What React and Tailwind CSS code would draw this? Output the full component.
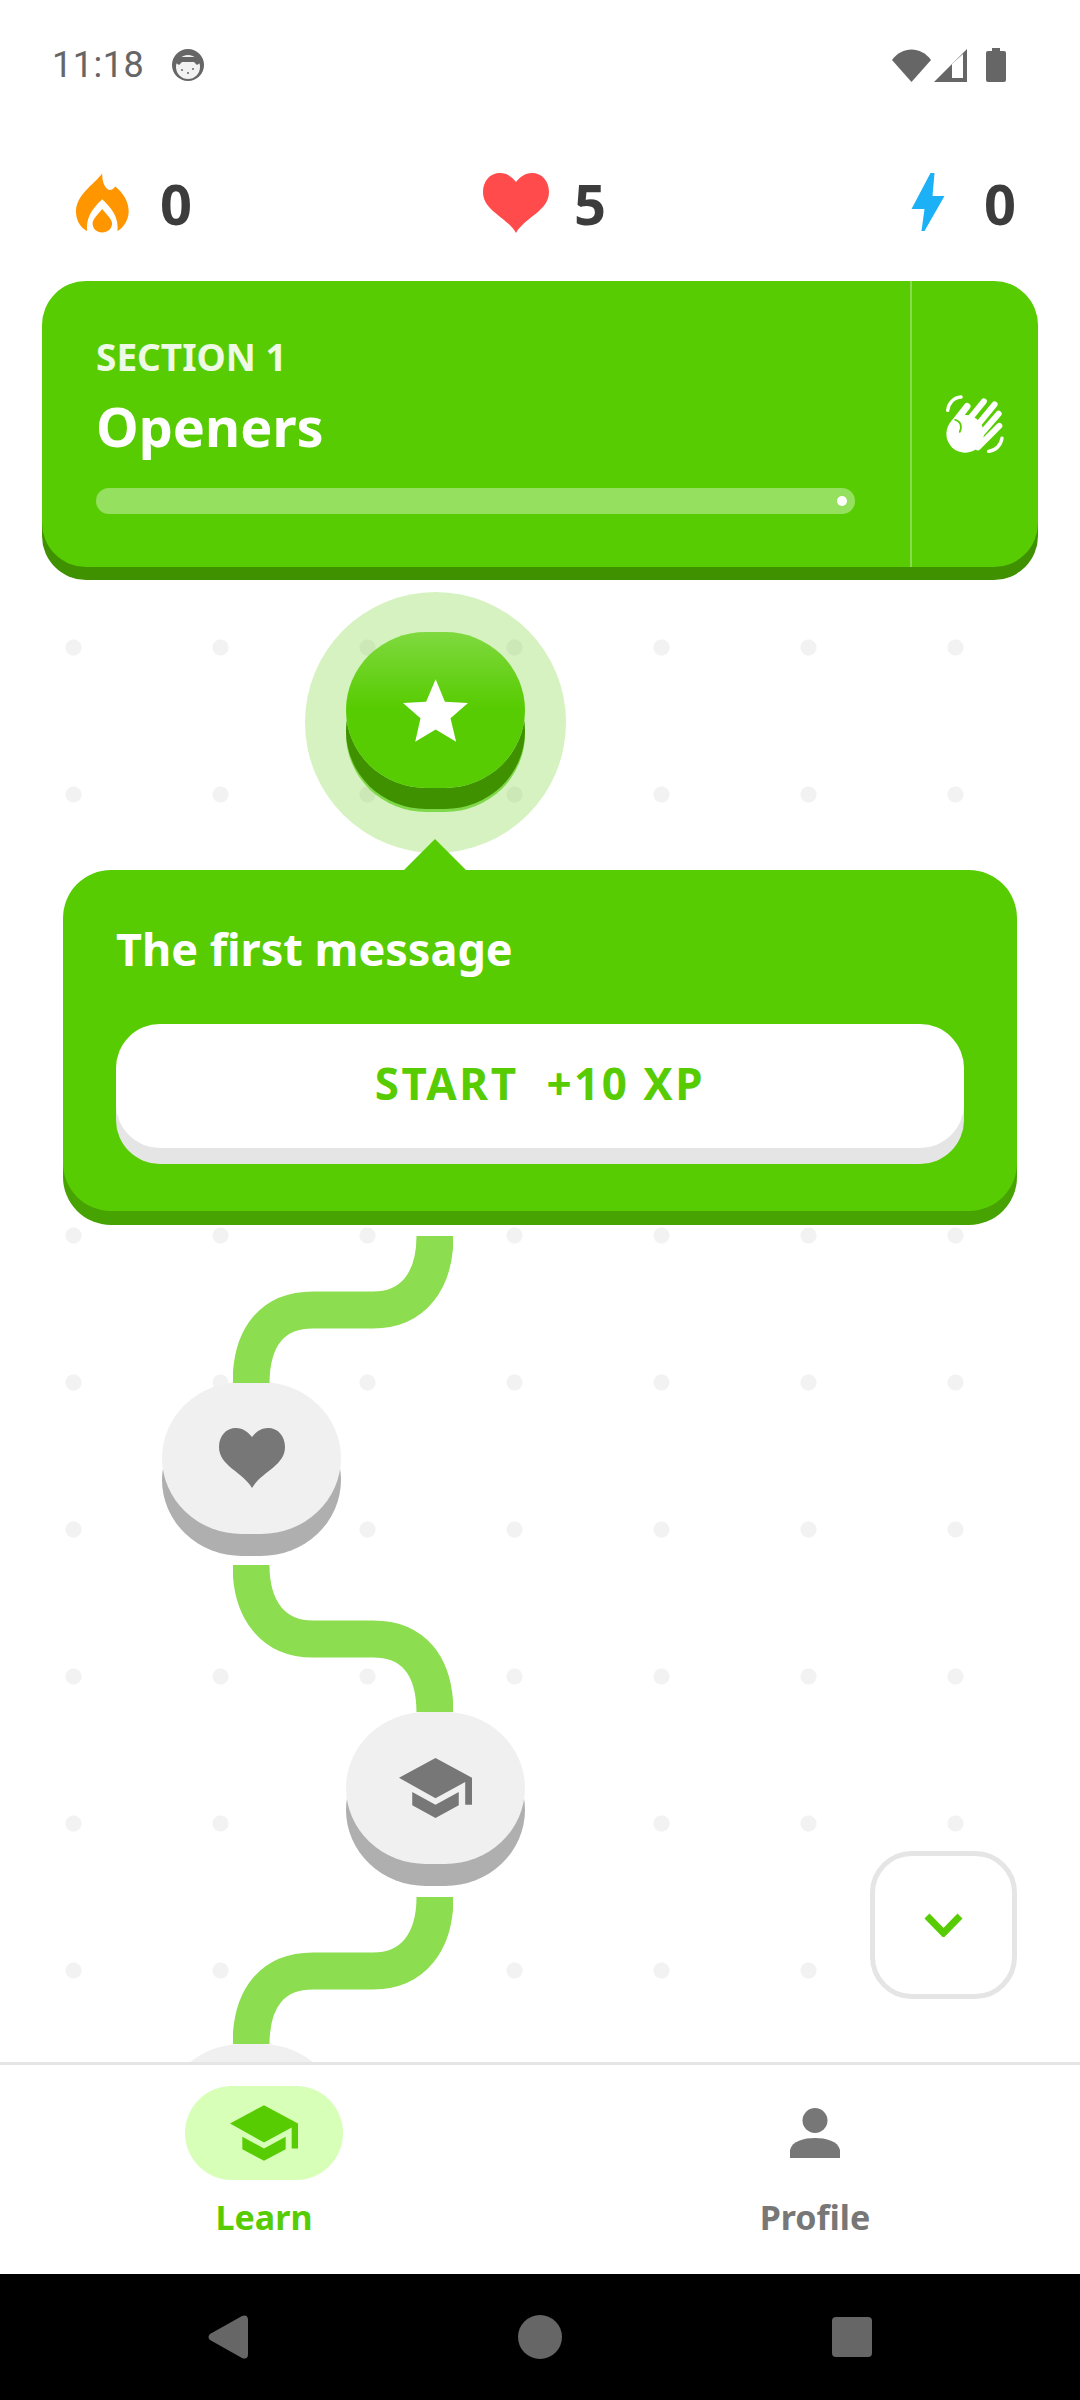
const FONT = "font-['Noto_Sans',sans-serif]";

function Flame() {
  return (
    <svg viewBox="78 65 160 178" className="h-[60px] w-[53px]">
      <path d="M157 65C157 82 160 106 178 115C186 116 192 109 197 104C222 125 237 150 237 180C237 205 222 228 205 238L110 238C90 228 78 205 78 180C78 130 130 100 157 65Z" fill="#ff9600" />
      <path d="M157 143C185 170 208 195 203 243L112 243C106 195 130 170 157 143Z" fill="#fff" />
      <path d="M157 172C172 190 187 205 187 215C187 232 173 243 157 243C141 243 128 232 128 215C128 205 142 190 157 172Z" fill="#ff9600" />
    </svg>
  );
}

function Heart({ color }) {
  return (
    <svg viewBox="0 0 66 60" className="h-[60px] w-[66px]">
      <path d="M33 60C24 44 0 38 0 19C0 8 7 0 17 0C24 0 29 4 33 9C37 4 42 0 49 0C59 0 66 8 66 19C66 38 42 44 33 60Z" fill={color} />
    </svg>
  );
}

function Bolt() {
  return (
    <svg viewBox="0 0 33 59" className="h-[59px] w-[34px]">
      <polygon points="19,0 23,0 21,23 33,23 13,58 10,58 13,36 0,36" fill="#1cb0f6" />
    </svg>
  );
}

function Cap({ color, className }) {
  return (
    <svg viewBox="180 108 204 167" className={className}>
      <polygon points="282,108 384,163 384,238 365,238 365,175 282,220 180,163" fill={color} />
      <polygon points="217,203 282,238 347,203 347,240 282,275 217,240" fill={color} />
    </svg>
  );
}

function Wave() {
  return (
    <svg viewBox="135 100 185 185" className="h-[62px] w-[62px]" fill="none" stroke="#fff" strokeLinecap="round">
      <path d="M146 152C148 130 165 113 186 112" strokeWidth="10" />
      <path d="M268 274C290 272 305 255 308 235" strokeWidth="10" />
      <circle cx="198" cy="222" r="56" fill="#fff" stroke="none" />
      <path d="M204 140L165 190" strokeWidth="20" />
      <path d="M254 125L205 185" strokeWidth="18" />
      <path d="M286 134L222 212" strokeWidth="18" />
      <path d="M298 162L230 240" strokeWidth="18" />
      <path d="M300 198L236 262" strokeWidth="18" />
      <path d="M168 180C184 184 190 198 182 216" stroke="#58cc02" strokeWidth="5" />
    </svg>
  );
}

function Node({ children, className }) {
  return (
    <div className={`flex h-[152px] w-[179px] items-center justify-center rounded-[80px/76px] bg-[#f0f0f0] shadow-[0_22px_0_#afafaf] ${className}`}>
      {children}
    </div>
  );
}

function Connector({ flip, className }) {
  const d = flip
    ? "M18 0C18 45 40 74 80 74L140 74C180 74 202 100 202 148"
    : "M202 0C202 45 180 74 140 74L80 74C40 74 18 100 18 148";
  return (
    <svg viewBox="0 0 220 147" className={`block h-[147px] w-[220px] ml-[233px] ${className}`} fill="none">
      <path d={d} stroke="#8cdd50" strokeWidth="37" />
    </svg>
  );
}

export default function App() {
  return (
    <div className={`flex h-[2400px] w-[1080px] flex-col overflow-hidden bg-white ${FONT}`}>
      {/* status bar */}
      <div className="flex h-[130px] shrink-0 items-center pl-[52px] pr-[74px] text-[#666]">
        <span className="font-['Roboto',sans-serif] text-[36px] leading-none tracking-[0.5px]">11:18</span>
        <svg viewBox="0 0 34 34" className="ml-[27px] h-[34px] w-[34px]">
          <circle cx="17" cy="17" r="16" fill="#666" />
          <circle cx="17" cy="19" r="12" fill="#f2f2f2" />
          <path d="M5 15L8 9L29 9L29 15L26 17L23 14L11 14L8 17Z" fill="#666" />
          <circle cx="11" cy="22" r="1" fill="#666" />
          <circle cx="17" cy="25" r="1" fill="#666" />
          <circle cx="22" cy="21" r="1" fill="#666" />
        </svg>
        <div className="ml-auto flex items-center">
          <svg viewBox="0 0 39 33" className="h-[33px] w-[39px]">
            <path d="M0 11C10 -3 29 -3 39 11L19.5 33Z" fill="#666" />
          </svg>
          <svg viewBox="0 0 33 33" className="ml-[3px] h-[33px] w-[33px]">
            <path d="M0 33L33 0L33 33Z" fill="#666" />
            <path d="M18 29L18 15L29 5L29 29Z" fill="#fff" />
          </svg>
          <svg viewBox="0 0 20 34" className="ml-[19px] h-[34px] w-[20px]">
            <path d="M6 0L14 0L14 3L18 3Q20 3 20 5L20 32Q20 34 18 34L2 34Q0 34 0 32L0 5Q0 3 2 3L6 3Z" fill="#666" />
          </svg>
        </div>
      </div>

      {/* stats */}
      <div className="grid h-[151px] shrink-0 grid-cols-[407px_1fr_auto] items-center pl-[76px] pr-[64px] pb-[6px] text-[56px] font-bold leading-none text-[#3c3c3c]">
        <div className="flex items-center gap-[31px]"><Flame /><span>0</span></div>
        <div className="flex items-center gap-[25px]"><Heart color="#ff4b4b" /><span>5</span></div>
        <div className="flex items-center gap-[39px]"><Bolt /><span>0</span></div>
      </div>

      {/* section card */}
      <div className="relative z-10 mx-[42px] flex h-[286px] shrink-0 rounded-[44px] bg-[#58cc02] shadow-[0_13px_0_#3f9100]">
        <div className="flex-1 pl-[54px] pr-[55px] pt-[56px]">
          <div className="text-[37px] font-bold leading-[40px] text-white/90">SECTION 1</div>
          <div className="mt-[17px] text-[54px] font-bold leading-[64px] text-white">Openers</div>
          <div className="mt-[30px] flex h-[26px] items-center justify-end rounded-full bg-[#95e15f] pr-[8px]">
            <div className="h-[10px] w-[10px] rounded-full bg-white" />
          </div>
        </div>
        <div className="flex w-[128px] items-center justify-center border-l-2 border-white/30">
          <Wave />
        </div>
      </div>

      {/* path */}
      <div className="relative min-h-0 flex-1 overflow-hidden bg-[radial-gradient(circle_at_center,#f2f2f2_7.5px,transparent_8.5px)] bg-[length:147px_147px] bg-[position:0_7px] pt-[25px]">
        <div className="ml-[305px] flex h-[261px] w-[261px] items-start justify-center rounded-full bg-[#58cc02]/25 pt-[40px]">
          <div className="flex h-[156px] w-[179px] items-center justify-center rounded-[80px/78px] bg-[linear-gradient(#7fd93f,#58cc02_48%)] shadow-[0_21px_0_#3f9100,0_24px_0_#7fd84a]">
            <svg viewBox="323 298 197 189" className="h-[63px] w-[65px]">
              <polygon points="422,298 450,366 520,370 467,416 484,487 422,450 360,487 376,416 323,370 393,366" fill="#fff" />
            </svg>
          </div>
        </div>

        {/* lesson popover */}
        <div className="relative mx-[63px] mt-[17px] h-[341px] rounded-[48px] bg-[#58cc02] px-[53px] pt-[53px] shadow-[0_14px_0_#46a302]">
          <div className="absolute left-[341px] top-[-31px] h-0 w-0 border-x-[31px] border-b-[31px] border-x-transparent border-b-[#58cc02]" />
          <div className="text-[45px] font-bold leading-[52px] text-white">The first message</div>
          <div className="mt-[49px] flex h-[124px] items-center justify-center rounded-[44px] bg-white pb-[6px] text-[44px] font-bold text-[#58cc02] shadow-[0_16px_0_#e5e5e5]">
            <span className="whitespace-pre tracking-[2.5px]">START  +10 XP</span>
          </div>
        </div>

        <Connector className="mt-[25px]" />
        <Node className="ml-[162px] mt-[-1px]"><Heart color="#777" /></Node>
        <Connector flip className="mt-[31px]" />
        <Node className="ml-[346px]"><Cap color="#777" className="h-[60px] w-[73px]" /></Node>
        <Connector className="mt-[33px]" />
        <Node className="ml-[162px]" />

        <div className="absolute right-[63px] top-[1284px] flex h-[148px] w-[147px] items-center justify-center rounded-[42px] border-[5px] border-[#e5e5e5] bg-white">
          <svg viewBox="0 0 39 24" className="h-[24px] w-[39px]" fill="none">
            <path d="M3 3L19.5 20L36 3" stroke="#58cc02" strokeWidth="7" />
          </svg>
        </div>
      </div>

      {/* bottom nav */}
      <div className="flex h-[212px] shrink-0 border-t-[3px] border-[#e5e5e5] bg-white pt-[21px] text-[34px] font-bold leading-[40px]">
        <div className="ml-[185px] flex w-[158px] flex-col items-center text-[#58cc02]">
          <div className="flex h-[94px] w-[158px] items-center justify-center rounded-[47px] bg-[#d7ffb8]">
            <Cap color="#58cc02" className="h-[56px] w-[68px]" />
          </div>
          <span className="mt-[17px]">Learn</span>
        </div>
        <div className="ml-[393px] flex w-[158px] flex-col items-center text-[#777]">
          <div className="flex h-[94px] items-center justify-center">
            <svg viewBox="0 0 50 50" className="h-[50px] w-[50px]">
              <circle cx="25" cy="12.5" r="12.5" fill="#777" />
              <path d="M0 50L0 42C2 33 14 30 25 30C36 30 48 33 50 42L50 50Z" fill="#777" />
            </svg>
          </div>
          <span className="mt-[17px]">Profile</span>
        </div>
      </div>

      {/* android nav */}
      <div className="flex h-[126px] shrink-0 items-center bg-black">
        <svg viewBox="0 0 40 44" className="ml-[208px] h-[44px] w-[40px]">
          <path d="M2 19L34 1Q40 -1 40 5L40 39Q40 45 34 43L2 25Q-1 22 2 19Z" fill="#666" />
        </svg>
        <div className="ml-[270px] h-[44px] w-[44px] rounded-full bg-[#666]" />
        <div className="ml-[270px] h-[40px] w-[40px] rounded-[4px] bg-[#666]" />
      </div>
    </div>
  );
}
